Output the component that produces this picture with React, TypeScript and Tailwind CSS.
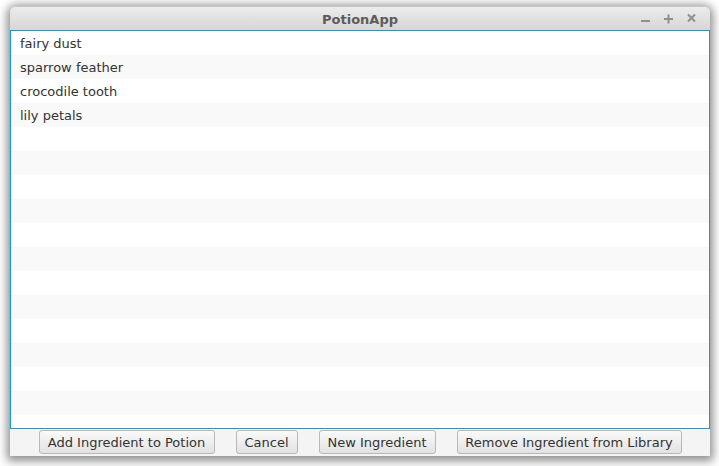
import React from "react";

const items = ["fairy dust", "sparrow feather", "crocodile tooth", "lily petals"];

export default function App() {
  const rows = Array.from({ length: 17 }, (_, i) => items[i] ?? "");
  const font = { fontFamily: '"DejaVu Sans", sans-serif' };
  return (
    <div className="w-[719px] h-[466px] bg-white overflow-hidden pt-[6px] pl-[10px]" style={font}>
      <div className="w-[700px] h-[450px] flex flex-col rounded-t-[6px] bg-[#f4f4f4] shadow-[0_2px_10px_3px_rgba(0,0,0,0.45)]">
        <div className="h-[24px] flex items-center relative rounded-t-[6px] bg-gradient-to-b from-[#ececec] to-[#d6d6d6] border-t border-[#c8c8c8]">
          <div className="flex-1 text-center text-[13px] font-bold text-[#5c5c5c] pt-[2px]">PotionApp</div>
          <div className="absolute right-[12px] top-[4px] flex gap-[10px]">
            <svg width="13" height="14" viewBox="0 0 13 14"><path d="M2 10h9" stroke="#8f8f8f" strokeWidth="2" /></svg>
            <svg width="13" height="14" viewBox="0 0 13 14"><path d="M2 8h9M6.5 3.5v9" stroke="#8f8f8f" strokeWidth="2" /></svg>
            <svg width="13" height="14" viewBox="0 0 13 14"><path d="M3 3.5l7 7M10 3.5l-7 7" stroke="#8f8f8f" strokeWidth="2" /></svg>
          </div>
        </div>
        <div className="h-[399px] border border-[#0a9fd6] bg-white overflow-hidden">
          {rows.map((t, i) => (
            <div
              key={i}
              className={`h-[24px] flex items-center pl-[9px] pt-[2px] text-[13px] text-[#333333] ${i % 2 === 1 ? "bg-[#f9f9f9]" : "bg-white"}`}
            >
              {t}
            </div>
          ))}
        </div>
        <div className="h-[27px] flex items-start justify-center gap-[21px] pt-[1px] bg-[#f4f4f4]">
          {[
            ["Add Ingredient to Potion", "w-[176px]"],
            ["Cancel", "w-[62px]"],
            ["New Ingredient", "w-[117px]"],
            ["Remove Ingredient from Library", "w-[225px]"],
          ].map(([label, w]) => (
            <button
              key={label}
              className={`${w} h-[24px] rounded-[3px] border border-[#b8b8b8] bg-gradient-to-b from-[#fafafa] to-[#e2e2e2] text-[13px] text-[#333333] flex items-center justify-center pt-[2px]`}
              style={font}
            >
              {label}
            </button>
          ))}
        </div>
      </div>
    </div>
  );
}
